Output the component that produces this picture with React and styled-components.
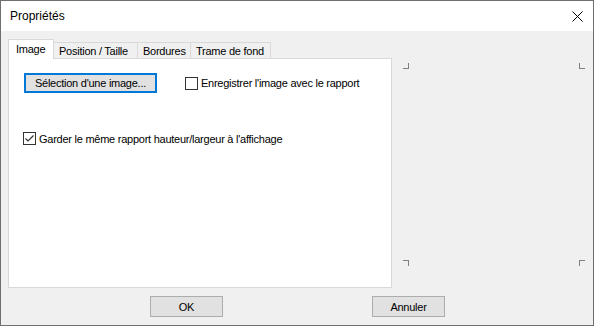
import React from 'react'
import styled, { createGlobalStyle } from 'styled-components'

const GlobalStyle = createGlobalStyle`
    body{
        margin: 0;
        background: #FFFFFF;
        font-family: "Liberation Sans", Arial, sans-serif;
    }
`;

const Window = styled.div`
    width: 594px;
    height: 326px;
    box-sizing: border-box;
    border: 1px solid #6f6f6f;
    background: #F0F0F0;
    display: flex;
    flex-direction: column;
    font-size: 11px;
    letter-spacing: -0.25px;
    color: #000;
`;

const TitleBar = styled.div`
    height: 30px;
    flex-shrink: 0;
    background: #FFFFFF;
    display: flex;
    align-items: center;
    justify-content: space-between;
    padding: 0 10px 0 9px;
    font-size: 12px;
    letter-spacing: 0;
`;

const Body = styled.div`
    flex: 1;
    padding: 8px 0 0 7px;
    display: flex;
    flex-direction: column;
`;

const Main = styled.div`
    display: flex;
`;

const LeftCol = styled.div`
    width: 384px;
    display: flex;
    flex-direction: column;
`;

const TabRow = styled.div`
    display: flex;
    align-items: flex-end;
    height: 20px;
    margin-bottom: -1px;
    position: relative;
    z-index: 1;
`;

const Tab = styled.div`
    width: ${p => p.$w}px;
    height: ${p => (p.$active ? 20 : 17)}px;
    box-sizing: border-box;
    border: 1px solid #D9D9D9;
    border-bottom: ${p => (p.$active ? 'none' : '1px solid #D9D9D9')};
    margin-left: ${p => (p.$first ? 0 : -1)}px;
    background: ${p => (p.$active ? '#FFFFFF' : '#F0F0F0')};
    display: flex;
    align-items: center;
    padding-left: ${p => (p.$active ? 7 : 5)}px;
    padding-bottom: ${p => (p.$active ? 2 : 0)}px;
    white-space: nowrap;
`;

const Panel = styled.div`
    height: 230px;
    box-sizing: border-box;
    border: 1px solid #D9D9D9;
    background: #FFFFFF;
    padding: 14px 15px;
`;

const Row = styled.div`
    display: flex;
    align-items: center;
    margin-top: ${p => p.$top || 0}px;
    margin-left: ${p => p.$left || 0}px;
`;

const PushButton = styled.div`
    width: ${p => p.$w}px;
    height: ${p => p.$h}px;
    box-sizing: border-box;
    border: ${p => (p.$focus ? '2px solid #0078D7' : '1px solid #ADADAD')};
    background: #E1E1E1;
    display: flex;
    align-items: center;
    justify-content: center;
    white-space: nowrap;
`;

const Check = styled.label`
    display: flex;
    align-items: center;
    margin-left: ${p => p.$gap || 0}px;
    white-space: nowrap;
    .box{
        width: 13px;
        height: 13px;
        box-sizing: border-box;
        border: 1px solid #333333;
        background: #FFFFFF;
        margin-right: 3px;
        display: flex;
        align-items: center;
        justify-content: center;
    }
`;

const Preview = styled.div`
    width: 182px;
    height: 203px;
    margin: 24px 0 0 11px;
    display: grid;
    grid-template-columns: 6px 6px;
    grid-template-rows: 6px 6px;
    justify-content: space-between;
    align-content: space-between;
`;

const Corner = styled.div`
    width: 6px;
    height: 6px;
    box-sizing: border-box;
    border-color: #808080;
    border-style: solid;
    border-width: ${p => p.$b};
`;

const Footer = styled.div`
    display: flex;
    gap: 149px;
    margin: 8px 0 0 142px;
`;

const CheckBox = ({ checked, children, gap }) => (
    <Check $gap={gap}>
        <span className='box'>
            {checked && (
                <svg width="11" height="11" viewBox="0 0 11 11">
                    <polyline points="1.5,5.5 4,8 9.5,2.5" fill="none" stroke="#333" strokeWidth="1.2" />
                </svg>
            )}
        </span>
        {children}
    </Check>
)

const App = () => {
    return (
        <>
            <GlobalStyle />
            <Window>
                <TitleBar>
                    <span>Propriétés</span>
                    <svg width="11" height="11" viewBox="0 0 11 11">
                        <path d="M0.5 0.5L10.5 10.5M10.5 0.5L0.5 10.5" stroke="#000" strokeWidth="1" />
                    </svg>
                </TitleBar>
                <Body>
                    <Main>
                        <LeftCol>
                            <TabRow>
                                <Tab $w={46} $active $first>Image</Tab>
                                <Tab $w={85}>Position / Taille</Tab>
                                <Tab $w={54}>Bordures</Tab>
                                <Tab $w={81}>Trame de fond</Tab>
                            </TabRow>
                            <Panel>
                                <Row>
                                    <PushButton $w={133} $h={20} $focus>Sélection d'une image...</PushButton>
                                    <CheckBox gap={28}>Enregistrer l'image avec le rapport</CheckBox>
                                </Row>
                                <Row $top={39} $left={-1}>
                                    <CheckBox checked>Garder le même rapport hauteur/largeur à l'affichage</CheckBox>
                                </Row>
                            </Panel>
                        </LeftCol>
                        <Preview>
                            <Corner $b="0 1px 1px 0" />
                            <Corner $b="0 0 1px 1px" />
                            <Corner $b="1px 1px 0 0" />
                            <Corner $b="1px 0 0 1px" />
                        </Preview>
                    </Main>
                    <Footer>
                        <PushButton $w={73} $h={21}>OK</PushButton>
                        <PushButton $w={73} $h={21}>Annuler</PushButton>
                    </Footer>
                </Body>
            </Window>
        </>
    )
}

export default App
